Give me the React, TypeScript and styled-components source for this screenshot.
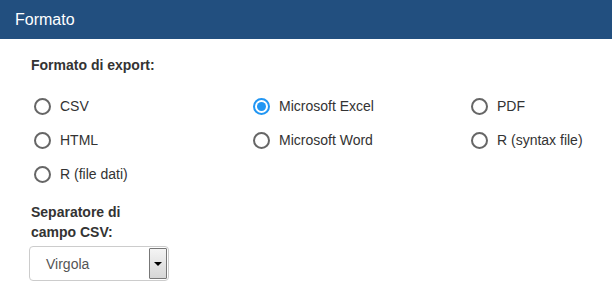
import styled, { createGlobalStyle } from 'styled-components';

const GlobalStyle = createGlobalStyle`
    body {
        margin: 0;
        background: #fff;
        font-family: "Liberation Sans", Arial, sans-serif;
        color: #333;
    }
`;

const Panel = styled.div`
    width: 612px;
    height: 295px;
    overflow: hidden;
`;

const Heading = styled.div`
    height: 39px;
    background: #224f7f;
    color: #fff;
    font-size: 16px;
    display: flex;
    align-items: center;
    padding-left: 15px;
    box-sizing: border-box;
`;

const Body = styled.div`
    padding: 16px 0 0 31px;
`;

const Label = styled.div<{ $width?: number }>`
    font-weight: bold;
    font-size: 14px;
    line-height: 20px;
    width: ${(p) => (p.$width ? `${p.$width}px` : 'auto')};
`;

const Options = styled.div`
    display: grid;
    grid-template-columns: 219px 218px 120px;
    grid-auto-rows: 34px;
    margin: 14px 0 11px 3px;
`;

const Option = styled.label`
    display: flex;
    align-items: center;
    gap: 9px;
    font-size: 14px;
    color: #333;
`;

const Radio = styled.span<{ $checked?: boolean }>`
    width: 17px;
    height: 17px;
    box-sizing: border-box;
    border-radius: 50%;
    border: 2px solid ${(p) => (p.$checked ? '#2196f3' : '#666')};
    display: flex;
    align-items: center;
    justify-content: center;
    &::after {
        content: '';
        width: 9px;
        height: 9px;
        border-radius: 50%;
        background: #2196f3;
        display: ${(p) => (p.$checked ? 'block' : 'none')};
    }
`;

const Select = styled.div`
    margin: 4px 0 0 -2px;
    width: 140px;
    height: 35px;
    box-sizing: border-box;
    border: 1px solid #ccc;
    border-radius: 4px;
    display: flex;
    align-items: stretch;
    font-size: 14px;
    color: #555;
`;

const SelectText = styled.span`
    flex: 1;
    display: flex;
    align-items: center;
    padding-left: 16px;
`;

const Arrow = styled.span`
    width: 16px;
    margin: 1px 1px 1px 0;
    border: 1px solid #777;
    border-radius: 1px;
    background: linear-gradient(#f4f4f4, #d6d6d6);
    display: flex;
    align-items: center;
    justify-content: center;
    &::after {
        content: '';
        border-left: 4px solid transparent;
        border-right: 4px solid transparent;
        border-top: 4px solid #000;
    }
`;

const formats = [
    { name: 'CSV' },
    { name: 'Microsoft Excel', checked: true },
    { name: 'PDF' },
    { name: 'HTML' },
    { name: 'Microsoft Word' },
    { name: 'R (syntax file)' },
    { name: 'R (file dati)' },
];

export default function App() {
    return (
        <Panel>
            <GlobalStyle />
            <Heading>Formato</Heading>
            <Body>
                <Label>Formato di export:</Label>
                <Options>
                    {formats.map((f) => (
                        <Option key={f.name}>
                            <Radio $checked={f.checked} />
                            {f.name}
                        </Option>
                    ))}
                </Options>
                <Label $width={120}>Separatore di campo CSV:</Label>
                <Select>
                    <SelectText>Virgola</SelectText>
                    <Arrow />
                </Select>
            </Body>
        </Panel>
    );
}
